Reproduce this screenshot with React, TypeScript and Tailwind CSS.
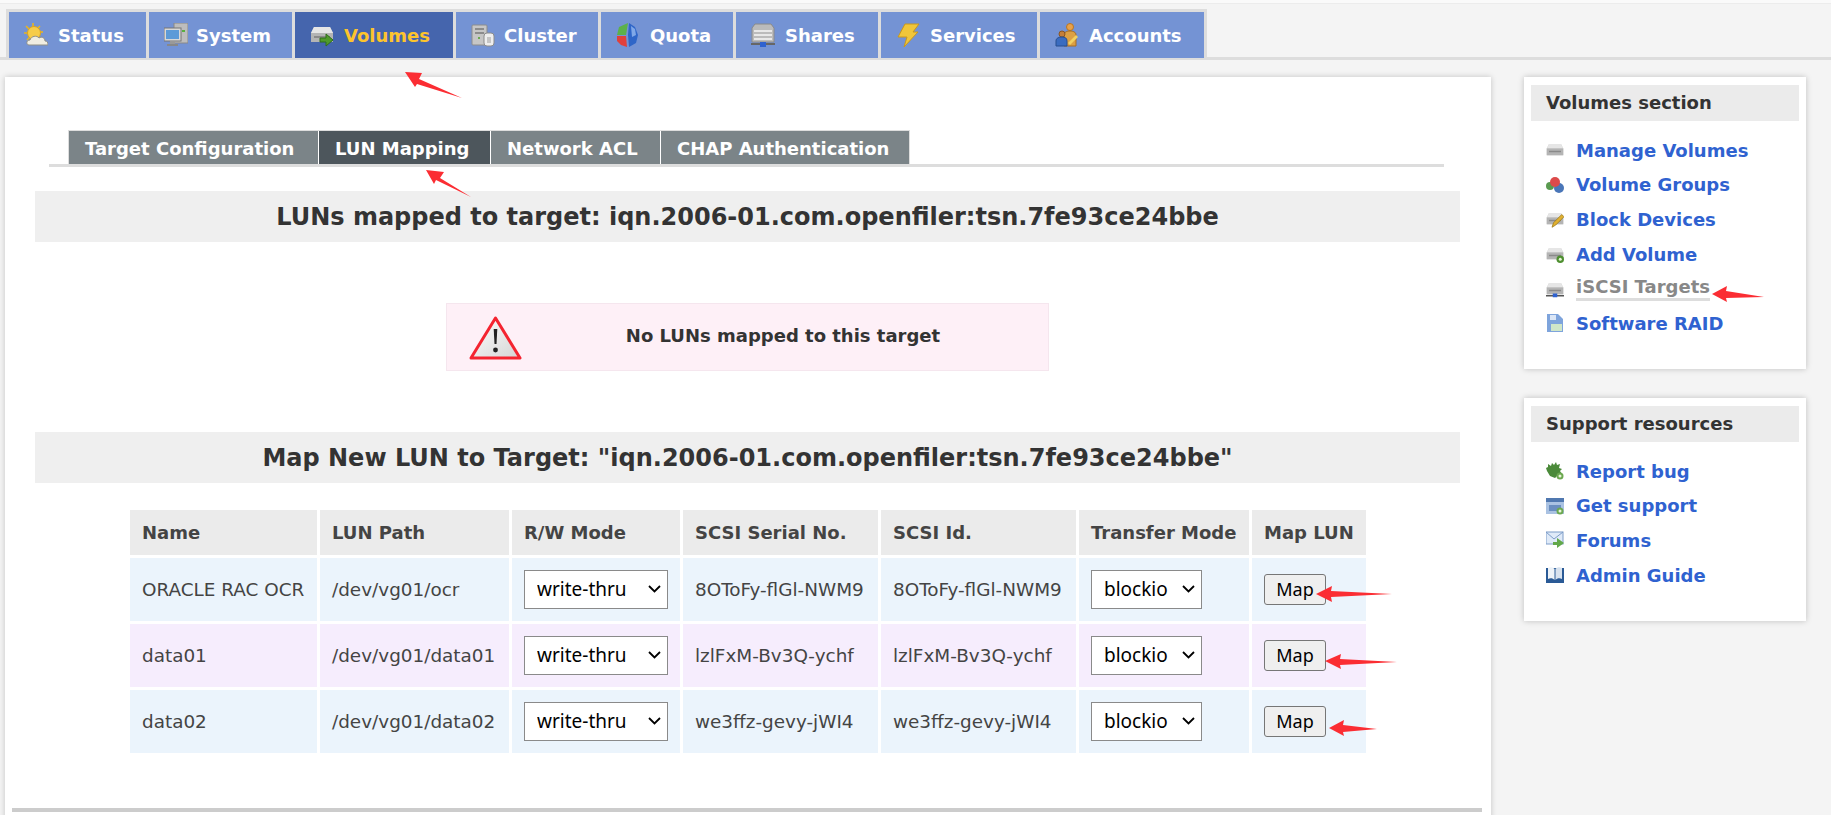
import React from "react";

const Drive = ({ s = 24, arrow = false, plus = false, net = false, pen = false }: { s?: number; arrow?: boolean; plus?: boolean; net?: boolean; pen?: boolean }) => (
  <svg width={s} height={s} viewBox="0 0 24 24" className="shrink-0">
    <path d="M4 4h16l3 6v9H1v-9z" fill="#c9c9c9" />
    <path d="M4 4h16l3 6H1z" fill="#e6e6e6" />
    <rect x="1" y="10" width="22" height="9" fill="#b4b4b4" />
    <rect x="4" y="13" width="16" height="2" fill="#8a8a8a" />
    {arrow && <path d="M10 15h6v-4l7 6-7 6v-4h-6z" fill="#4f9a2a" stroke="#2f6f18" strokeWidth="1" />}
    {plus && <><circle cx="19" cy="19" r="5" fill="#4e8f30" /><circle cx="19" cy="19" r="2" fill="#e8f5d8" /></>}
    {net && <><rect x="0" y="20" width="24" height="2" fill="#555" /><rect x="9" y="18" width="6" height="5" fill="#2f62d0" /></>}
    {pen && <path d="M8 23l2-6 11-11 3 3-11 11z" fill="#e0b030" stroke="#9a7515" strokeWidth="1" />}
  </svg>
);

const SunIcon = () => (
  <svg width="24" height="24" viewBox="0 0 24 24" className="shrink-0">
    <g stroke="#e8b520" strokeWidth="1.6">
      <path d="M9 0v4M2 3l3 3M0 10h4M16 3l-3 3M19 9h-4M3 17l3-3" />
    </g>
    <circle cx="10" cy="10" r="6.5" fill="#f6cc4a" stroke="#dfa51c" />
    <path d="M5 22c-3 0-3-5 1-5 1-4 7-5 9-2 3-2 6 0 6 3 2 0 3 1 3 4z" fill="#f0ede2" stroke="#8f8f86" />
  </svg>
);
const SystemIcon = () => (
  <svg width="24" height="24" viewBox="0 0 24 24" className="shrink-0">
    <rect x="10" y="0" width="14" height="20" fill="#bdbdbd" stroke="#888" />
    <rect x="18" y="7" width="3" height="2" fill="#58b040" />
    <rect x="0" y="5" width="17" height="13" fill="#d8d8d8" stroke="#777" />
    <rect x="2" y="7" width="13" height="9" fill="#5c9ad8" />
    <rect x="6" y="18" width="5" height="3" fill="#999" />
    <rect x="3" y="21" width="11" height="2" fill="#888" />
  </svg>
);
const ClusterIcon = () => (
  <svg width="24" height="24" viewBox="0 0 24 24" className="shrink-0">
    <rect x="1" y="2" width="15" height="20" rx="1" fill="#c6c6c6" stroke="#8c8c8c" />
    <rect x="4" y="5" width="9" height="2" fill="#8c8c8c" />
    <rect x="4" y="9" width="9" height="2" fill="#8c8c8c" />
    <rect x="7" y="14" width="2" height="2" fill="#6aaa50" />
    <rect x="13" y="10" width="10" height="13" rx="3" fill="#eee" stroke="#8c8c8c" />
    <rect x="16" y="14" width="4" height="6" fill="#c5c5c5" />
  </svg>
);
const QuotaIcon = () => (
  <svg width="24" height="24" viewBox="0 0 24 24" className="shrink-0">
    <path d="M3 4l9-4-2 12-9 0z" fill="#5cb14b" />
    <path d="M1 13h9l1 11-6-2-4-4z" fill="#e0403c" />
    <path d="M13 0l6 4 3 8-2 8-7 4-1-12z" fill="#2f66c8" />
    <path d="M15 3l4 3 1 6-4 2z" fill="#80a8e8" />
  </svg>
);
const SharesIcon = () => (
  <svg width="24" height="24" viewBox="0 0 24 24" className="shrink-0">
    <path d="M4 1h16l3 4v14H1V5z" fill="#bbb" stroke="#8a8a8a" />
    <rect x="3" y="7" width="18" height="2" fill="#e8e8e8" />
    <rect x="3" y="11" width="18" height="2" fill="#e8e8e8" />
    <rect x="3" y="15" width="18" height="2" fill="#e8e8e8" />
    <rect x="0" y="20" width="24" height="2" fill="#666" />
    <rect x="9" y="19" width="6" height="5" fill="#2f62d0" />
  </svg>
);
const BoltIcon = () => (
  <svg width="24" height="24" viewBox="0 0 24 24" className="shrink-0">
    <path d="M9 1h14l-6 8h5L8 24l3-10H2z" fill="#f0c63a" stroke="#c9981c" />
  </svg>
);
const AccountsIcon = () => (
  <svg width="24" height="24" viewBox="0 0 24 24" className="shrink-0">
    <circle cx="15" cy="4" r="3.5" fill="#e8a24a" stroke="#b87422" />
    <path d="M9 23V12c0-3 3-4 6-4s6 1 6 4v11z" fill="#dca044" stroke="#a86c20" />
    <circle cx="7" cy="11" r="3" fill="#c47f3a" stroke="#8a5522" />
    <path d="M1 23v-5c0-3 3-4 6-4s5 1 5 4v5z" fill="#3a6cc0" stroke="#274e90" />
    <path d="M13 20l8-8 2 2-8 8z" fill="#f2d060" />
  </svg>
);

const CubesIcon = () => (
  <svg width="18" height="18" viewBox="0 0 18 18" className="shrink-0">
    <circle cx="4" cy="10" r="4" fill="#5a9a50" />
    <circle cx="13" cy="12" r="5" fill="#4a76b8" />
    <circle cx="9" cy="6" r="5" fill="#dc4a4a" />
  </svg>
);
const FloppyIcon = () => (
  <svg width="18" height="18" viewBox="0 0 18 18" className="shrink-0">
    <path d="M1 0h11l5 5v13H1z" fill="#7ea4dc" />
    <rect x="4" y="1" width="6" height="5" fill="#dbe6f6" />
    <rect x="5" y="10" width="11" height="7" fill="#cfe6c8" />
  </svg>
);
const BugIcon = () => (
  <svg width="18" height="18" viewBox="0 0 18 18" className="shrink-0">
    <path d="M2 2l3 2 1-3 2 2 2-3 1 3 3-1-1 4 3 1-2 2 2 3-4 1-3 3-5-2-3-5-1-3 2-1z" fill="#4b8a3a" />
    <circle cx="14" cy="14" r="3.5" fill="#6ca850" />
    <circle cx="14" cy="14" r="1.5" fill="#e8f5d8" />
  </svg>
);
const SupportIcon = () => (
  <svg width="18" height="18" viewBox="0 0 18 18" className="shrink-0">
    <rect x="0" y="1" width="18" height="4" fill="#5078b0" />
    <rect x="0" y="5" width="18" height="12" fill="#aac2e2" />
    <rect x="3" y="8" width="12" height="6" fill="#6a8ec0" />
    <circle cx="14" cy="14" r="3.5" fill="#6ca850" />
    <circle cx="14" cy="14" r="1.5" fill="#e8f5d8" />
  </svg>
);
const MailIcon = () => (
  <svg width="18" height="18" viewBox="0 0 18 18" className="shrink-0">
    <rect x="0" y="1" width="17" height="12" fill="#dfeaf8" stroke="#7c9cc8" />
    <path d="M0 1l8 7 9-7" fill="none" stroke="#7c9cc8" />
    <path d="M7 11h4V7l7 5-7 5v-3H7z" fill="#62a84a" />
  </svg>
);
const BookIcon = () => (
  <svg width="18" height="18" viewBox="0 0 18 18" className="shrink-0">
    <rect x="0" y="2" width="18" height="15" fill="#2a5a96" />
    <path d="M2 2c2-1 5-1 6.500 1v11C7 12 4 12 2 13z" fill="#eef3f8" />
    <path d="M16 2c-2-1-5-1-6.500 1v11c1.500-2 4.500-2 6.500-1z" fill="#d8e2ee" />
  </svg>
);

const tabs = [
  { label: "Status", icon: <SunIcon />, w: "w-[137px] gap-[10px]" },
  { label: "System", icon: <SystemIcon />, w: "w-[143px] gap-[8px]" },
  { label: "Volumes", icon: <Drive arrow />, w: "w-[158px] gap-[10px]", active: true },
  { label: "Cluster", icon: <ClusterIcon />, w: "w-[142px] gap-[9px]" },
  { label: "Quota", icon: <QuotaIcon />, w: "w-[132px] gap-[10px]" },
  { label: "Shares", icon: <SharesIcon />, w: "w-[142px] gap-[10px]" },
  { label: "Services", icon: <BoltIcon />, w: "w-[156px] gap-[10px]" },
  { label: "Accounts", icon: <AccountsIcon />, w: "w-[164px] gap-[10px]" },
];

const subtabs = [
  { label: "Target Configuration", w: "w-[249px]" },
  { label: "LUN Mapping", w: "w-[171px]", active: true },
  { label: "Network ACL", w: "w-[169px]" },
  { label: "CHAP Authentication", w: "w-[248px]" },
];

const volumeLinks = [
  { label: "Manage Volumes", icon: <Drive s={18} /> },
  { label: "Volume Groups", icon: <CubesIcon /> },
  { label: "Block Devices", icon: <Drive s={18} pen /> },
  { label: "Add Volume", icon: <Drive s={18} plus /> },
  { label: "iSCSI Targets", icon: <Drive s={18} net />, current: true },
  { label: "Software RAID", icon: <FloppyIcon /> },
];
const supportLinks = [
  { label: "Report bug", icon: <BugIcon /> },
  { label: "Get support", icon: <SupportIcon /> },
  { label: "Forums", icon: <MailIcon /> },
  { label: "Admin Guide", icon: <BookIcon /> },
];

const rows = [
  { name: "ORACLE RAC OCR", path: "/dev/vg01/ocr", serial: "8OToFy-flGl-NWM9", bg: "bg-[#ebf4fc]" },
  { name: "data01", path: "/dev/vg01/data01", serial: "lzlFxM-Bv3Q-ychf", bg: "bg-[#f6edfd]" },
  { name: "data02", path: "/dev/vg01/data02", serial: "we3ffz-gevy-jWI4", bg: "bg-[#ebf4fc]" },
];

const headers = ["Name", "LUN Path", "R/W Mode", "SCSI Serial No.", "SCSI Id.", "Transfer Mode", "Map LUN"];

const Heading = ({ children }: { children: React.ReactNode }) => (
  <h2 className="ml-[30px] flex h-[51px] w-[1425px] items-center justify-center bg-[#efefef] text-[24px] font-bold text-[#333]">
    {children}
  </h2>
);

const Side = ({ title, links, h, top }: { title: string; links: { label: string; icon: React.ReactNode; current?: boolean }[]; h: string; top: string }) => (
  <section className={`${h} w-[282px] bg-white px-[7px] pt-[8px] shadow-[0_0_6px_rgba(0,0,0,0.22)]`}>
    <h3 className="flex h-[36px] items-center bg-[#ebebeb] pb-[1px] pl-[15px] text-[18px] font-bold text-[#333]">{title}</h3>
    <ul className={top}>
      {links.map((l) => (
        <li key={l.label} className="flex h-[34.6px] items-center pl-[15px]">
          {l.icon}
          <span
            className={
              l.current
                ? "ml-[12px] border-b-[3px] border-[#ddd] text-[18px] leading-[22px] font-bold text-[#888]"
                : "ml-[12px] text-[18px] font-bold text-[#2f62d0]"
            }
          >
            {l.label}
          </span>
        </li>
      ))}
    </ul>
  </section>
);

const Select = ({ w, value }: { w: string; value: string }) => (
  <div className={`relative ${w}`}>
    <select className="h-[39px] w-full appearance-none border border-[#8a8a8a] bg-white pl-[12px] font-['Noto_Sans',sans-serif] text-[19px] text-black">
      <option>{value}</option>
    </select>
    <svg width="13" height="8" viewBox="0 0 13 8" className="pointer-events-none absolute top-[15px] right-[7px]">
      <path d="M1 1l5.500 5.500L12 1" fill="none" stroke="#000" strokeWidth="1.800" />
    </svg>
  </div>
);

export default function App() {
  return (
    <div className="relative h-[815px] w-[1831px] overflow-hidden bg-[#f4f4f4] font-['DejaVu_Sans',sans-serif]">
      <div className="h-[4px] border-b border-[#ececec] bg-[#fafafa]" />
      <div className="border-b-[3px] border-[#ddd] pt-[5px]">
        <nav className="-mb-px ml-[6px] flex w-fit gap-[3px] bg-[#ddd] px-[3px] pt-[3px]">
          {tabs.map((t) => (
            <div
              key={t.label}
              className={`${t.w} flex h-[46px] items-center pl-[15px] text-[18px] font-bold ${
                t.active ? "bg-[#4565ad] text-[#fdc42c]" : "bg-[#7493d4] text-white"
              }`}
            >
              {t.icon}
              <span className="pt-[1px]">{t.label}</span>
            </div>
          ))}
        </nav>
      </div>

      <div className="flex items-start pt-[17px]">
        <main className="ml-[5px] h-[800px] w-[1486px] shrink-0 bg-white pt-[53px] shadow-[0_0_6px_rgba(0,0,0,0.2)]">
          <div className="ml-[44px] w-[1395px] border-b-[3px] border-[#ddd]">
            <div className="ml-[19px] flex w-fit gap-px border-t border-l border-r border-[#ddd] bg-white">
              {subtabs.map((t) => (
                <div
                  key={t.label}
                  className={`${t.w} flex h-[33px] items-center pt-[1px] pl-[16px] text-[18px] font-bold text-white ${
                    t.active ? "bg-[#4d565c]" : "bg-[#7b8488]"
                  }`}
                >
                  {t.label}
                </div>
              ))}
            </div>
          </div>

          <div className="pt-[24px]">
            <Heading>LUNs mapped to target: iqn.2006-01.com.openfiler:tsn.7fe93ce24bbe</Heading>
          </div>

          <div className="mt-[61px] ml-[441px] flex h-[68px] w-[603px] items-center border border-[#f5e6ee] bg-[#fef0f7] pl-[22px]">
            <svg width="53" height="45" viewBox="0 0 53 45" className="shrink-0">
              <defs>
                <linearGradient id="wg" x1="0" y1="0" x2="1" y2="1">
                  <stop offset="0" stopColor="#ffffff" />
                  <stop offset="1" stopColor="#d4d4d4" />
                </linearGradient>
              </defs>
              <path d="M26.500 3L51 43H2z" fill="url(#wg)" stroke="#f42430" strokeWidth="3" strokeLinejoin="round" />
              <path d="M24.700 14h3.600l-.8 15h-2z" fill="#222" />
              <circle cx="26.500" cy="35" r="2.400" fill="#222" />
            </svg>
            <p className="flex-1 pr-[4px] pb-[3px] text-center text-[18px] font-bold text-[#333]">No LUNs mapped to this target</p>
          </div>

          <div className="pt-[61px]">
            <Heading>Map New LUN to Target: "iqn.2006-01.com.openfiler:tsn.7fe93ce24bbe"</Heading>
          </div>

          <div className="mt-[27px] ml-[125px] grid w-fit grid-cols-[187px_189px_168px_195px_195px_170px_114px] gap-[3px] text-[18.4px] text-[#444]">
            {headers.map((h) => (
              <div key={h} className="flex h-[45px] items-center bg-[#ebebeb] pl-[12px] text-[18px] font-bold text-[#444]">
                {h}
              </div>
            ))}
            {rows.map((r) => (
              <React.Fragment key={r.name}>
                <div className={`${r.bg} flex h-[63px] items-center pl-[12px]`}>{r.name}</div>
                <div className={`${r.bg} flex h-[63px] items-center pl-[12px]`}>{r.path}</div>
                <div className={`${r.bg} flex h-[63px] items-center pl-[12px]`}>
                  <Select w="w-[144px]" value="write-thru" />
                </div>
                <div className={`${r.bg} flex h-[63px] items-center pl-[12px]`}>{r.serial}</div>
                <div className={`${r.bg} flex h-[63px] items-center pl-[12px]`}>{r.serial}</div>
                <div className={`${r.bg} flex h-[63px] items-center pl-[12px]`}>
                  <Select w="w-[111px]" value="blockio" />
                </div>
                <div className={`${r.bg} flex h-[63px] items-center pl-[12px]`}>
                  <button className="h-[31px] w-[62px] rounded-[3px] border border-[#767676] bg-[#efefef] font-['Noto_Sans',sans-serif] text-[18px] text-black">
                    Map
                  </button>
                </div>
              </React.Fragment>
            ))}
          </div>

          <div className="mt-[55px] ml-[7px] h-[4px] w-[1470px] bg-[#ccc]" />
        </main>

        <aside className="ml-[33px] flex flex-col gap-[29px]">
          <Side title="Volumes section" links={volumeLinks} h="h-[292px]" top="mt-[12px]" />
          <Side title="Support resources" links={supportLinks} h="h-[223px]" top="mt-[12px]" />
        </aside>
      </div>

      <svg className="pointer-events-none absolute inset-0" width="1831" height="815" viewBox="0 0 1831 815">
        <g fill="#fb2d33">
          <polygon points="405,72 422,73 419,79 462,98 417,84 415,87" />
          <polygon points="426,170 444,172 440,178 471,197 436,180 434,184" />
          <polygon points="1712,294 1727,286 1726,291 1764,297 1726,298 1727,302" />
          <polygon points="1316,594 1332,586 1331,591 1392,594 1331,597 1332,602" />
          <polygon points="1325,661 1341,654 1340,659 1397,662 1340,665 1341,669" />
          <polygon points="1329,728 1344,720 1343,725 1377,729 1343,732 1344,736" />
        </g>
      </svg>
    </div>
  );
}
